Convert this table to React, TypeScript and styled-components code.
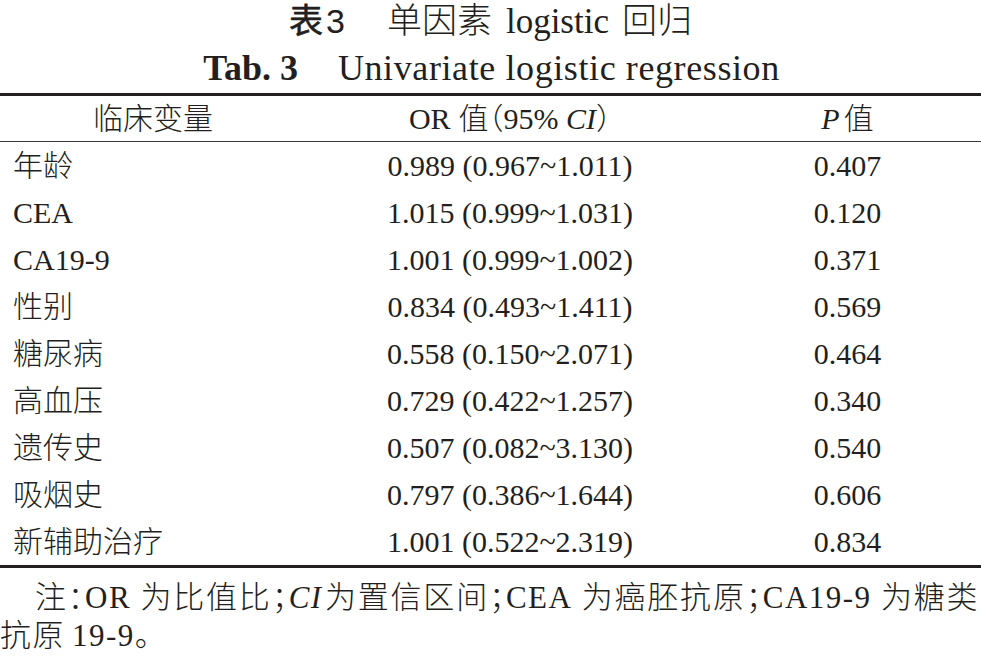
import React from "react";
import styled, { createGlobalStyle } from "styled-components";

const Global = createGlobalStyle`
  html, body { margin: 0; padding: 0; background: #ffffff; }
  body { font-family: "Liberation Serif", "Noto Sans CJK SC", serif; color: #231f20; }
`;

const Page = styled.div`
  width: 981px;
  height: 660px;
  overflow: hidden;
  background: #fff;
`;

const CaptionCn = styled.div`
  height: 42px;
  display: flex;
  justify-content: center;
  align-items: center;
  font-size: 35px;
  line-height: 1;
`;

const CaptionLabel = styled.span`
  font-family: "Liberation Sans", "Noto Sans CJK SC", sans-serif;
  font-size: 34px;
  margin-right: 42px;
`;

const LabelChar = styled.span`
  font-weight: 400;
  margin-right: 3px;
  -webkit-text-stroke: 0.6px #231f20;
`;

const CaptionText = styled.span`
  font-family: "Liberation Serif", "Noto Sans CJK SC", serif;
  font-weight: 300;
`;

const Latin = styled.span`
  margin: 0 13px 0 14px;
`;

const CaptionEn = styled.div`
  height: 51px;
  display: flex;
  justify-content: center;
  align-items: center;
  font-size: 36px;
  line-height: 50px;
  padding-left: 2px;
`;

const EnLabel = styled.span`
  font-weight: 700;
  margin-right: 40px;
`;

const EnText = styled.span`
  letter-spacing: 0.6px;
`;

const Table = styled.div`
  border-top: 3px solid #231f20;
  border-bottom: 3px solid #231f20;
`;

const Row = styled.div<{ $head?: boolean }>`
  display: grid;
  grid-template-columns: 306px 408px 1fr;
  align-items: center;
  height: ${(p) => (p.$head ? "45px" : "47px")};
  font-size: 30px;
  line-height: 34px;
  border-bottom: ${(p) => (p.$head ? "1px solid #3a3738" : "none")};
  font-feature-settings: "halt";
`;

const Cell = styled.div<{ $left?: boolean }>`
  text-align: ${(p) => (p.$left ? "left" : "center")};
  padding-left: ${(p) => (p.$left ? "13px" : "0")};
  white-space: nowrap;
  font-weight: 300;
`;

const Note = styled.div`
  margin-top: 11px;
  font-size: 31px;
  line-height: 38px;
  font-weight: 300;
  letter-spacing: 1.5px;
  font-feature-settings: "halt";
`;

const NoteLine = styled.div<{ $indent?: boolean }>`
  padding-left: ${(p) => (p.$indent ? "35px" : "0")};
  padding-right: ${(p) => (p.$indent ? "2px" : "0")};
  text-align: ${(p) => (p.$indent ? "justify" : "left")};
  text-align-last: ${(p) => (p.$indent ? "justify" : "left")};
  white-space: nowrap;
`;

const Word = styled.span<{ $l?: number; $r?: number }>`
  margin-left: ${(p) => p.$l ?? 0}px;
  margin-right: ${(p) => p.$r ?? 0}px;
`;

const rows: [string, string, string][] = [
  ["年龄", "0.989 (0.967~1.011)", "0.407"],
  ["CEA", "1.015 (0.999~1.031)", "0.120"],
  ["CA19-9", "1.001 (0.999~1.002)", "0.371"],
  ["性别", "0.834 (0.493~1.411)", "0.569"],
  ["糖尿病", "0.558 (0.150~2.071)", "0.464"],
  ["高血压", "0.729 (0.422~1.257)", "0.340"],
  ["遗传史", "0.507 (0.082~3.130)", "0.540"],
  ["吸烟史", "0.797 (0.386~1.644)", "0.606"],
  ["新辅助治疗", "1.001 (0.522~2.319)", "0.834"],
];

export default function App() {
  return (
    <Page>
      <Global />
      <CaptionCn>
        <CaptionLabel>
          <LabelChar>表</LabelChar>3
        </CaptionLabel>
        <CaptionText>
          单因素<Latin>logistic</Latin>回归
        </CaptionText>
      </CaptionCn>
      <CaptionEn>
        <EnLabel>Tab. 3</EnLabel>
        <EnText>Univariate logistic regression</EnText>
      </CaptionEn>
      <Table>
        <Row $head>
          <Cell>临床变量</Cell>
          <Cell>
            <Word $r={8}>OR</Word>值（95% <i>CI</i>）
          </Cell>
          <Cell>
            <Word $r={4}>
              <i>P</i>
            </Word>
            值
          </Cell>
        </Row>
        {rows.map((r) => (
          <Row key={r[0]}>
            <Cell $left>{r[0]}</Cell>
            <Cell>{r[1]}</Cell>
            <Cell>{r[2]}</Cell>
          </Row>
        ))}
      </Table>
      <Note>
        <NoteLine $indent>
          注：<Word $r={9}>OR</Word>为比值比；<Word $r={2}><i>CI</i></Word>为置信区间；<Word $r={9}>CEA</Word>为癌胚抗原；<Word $r={9}>CA19-9</Word>为糖类
        </NoteLine>
        <NoteLine>
          抗原<Word $l={7}>19-9</Word>。
        </NoteLine>
      </Note>
    </Page>
  );
}
